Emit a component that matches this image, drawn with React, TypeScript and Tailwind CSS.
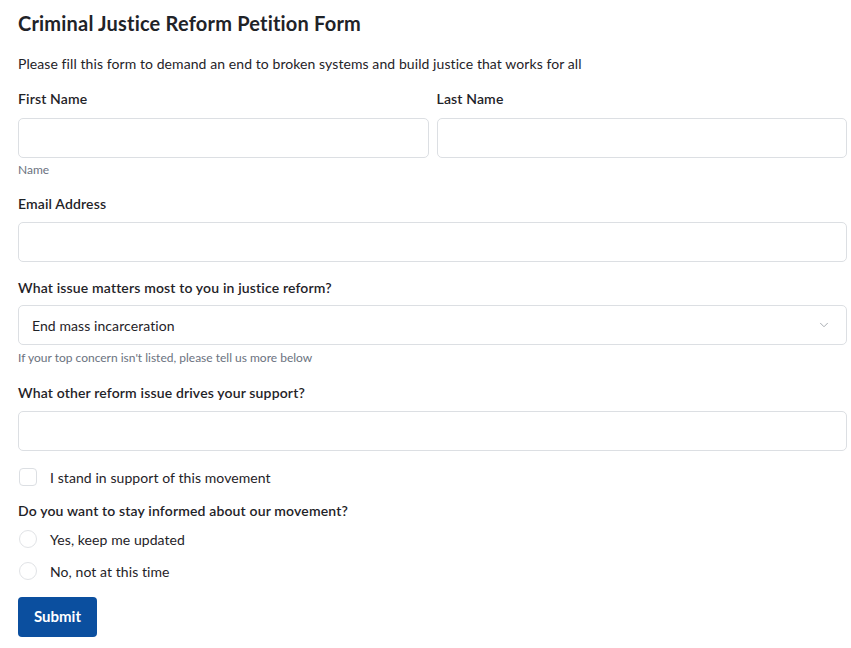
import { ChevronDown } from "lucide-react";

const font = { fontFamily: '"Lato", "Liberation Sans", sans-serif' };

const Label = ({ children, className = "" }: { children: React.ReactNode; className?: string }) => (
  <div className={`text-[14px] leading-5 font-semibold tracking-[0.15px] text-[#1f2328] ${className}`}>{children}</div>
);

const TextInput = ({ className = "" }: { className?: string }) => (
  <input
    type="text"
    className={`block w-full h-10 rounded-[5px] border border-[#dcdfe3] bg-white px-3 text-[14px] outline-none ${className}`}
  />
);

export default function App() {
  return (
    <div className="min-h-screen bg-white text-[#1f2328]" style={font}>
      <form className="w-[829px] ml-[18px] pt-[11px]" onSubmit={e => e.preventDefault()}>
        <h1 className="text-[20px] leading-6 font-bold tracking-[0.2px] text-[#1f2328]">Criminal Justice Reform Petition Form</h1>
        <p className="mt-[19px] text-[14px] leading-5 tracking-[0.08px] text-[#1f2328]">
          Please fill this form to demand an end to broken systems and build justice that works for all
        </p>

        <div className="mt-[15px] grid grid-cols-2 gap-x-2">
          <div>
            <Label>First Name</Label>
            <TextInput className="mt-[9px]" />
            <div className="mt-[5px] text-[12px] leading-[14px] text-[#6b7280]">Name</div>
          </div>
          <div>
            <Label>Last Name</Label>
            <TextInput className="mt-[9px]" />
          </div>
        </div>

        <Label className="mt-[17px]">Email Address</Label>
        <TextInput className="mt-2" />

        <Label className="mt-4">What issue matters most to you in justice reform?</Label>
        <div className="relative mt-[7px] h-10 w-full rounded-[5px] border border-[#dcdfe3] bg-white flex items-center pl-[13px] pr-[15px]">
          <span className="text-[14px] tracking-[0.08px] text-[#1f2328] flex-1">End mass incarceration</span>
          <ChevronDown className="w-[14px] h-[14px] text-[#9aa0a6]" strokeWidth={1.5} />
        </div>
        <div className="mt-[6px] text-[12px] leading-[14px] text-[#6b7280]">
          If your top concern isn't listed, please tell us more below
        </div>

        <Label className="mt-[18px]">What other reform issue drives your support?</Label>
        <TextInput className="mt-2" />

        <label className="mt-4 flex items-center h-5">
          <span className="ml-px w-[18px] h-[18px] rounded-[4px] border border-[#dcdfe3] bg-white" />
          <span className="ml-[13px] text-[14px] tracking-[0.08px] text-[#1f2328]">I stand in support of this movement</span>
        </label>

        <Label className="mt-[14px]">Do you want to stay informed about our movement?</Label>
        <label className="mt-2 flex items-center h-5">
          <span className="ml-px w-[18px] h-[18px] rounded-full border border-[#e1e3e6] bg-white" />
          <span className="ml-[13px] text-[14px] tracking-[0.08px] text-[#1f2328]">Yes, keep me updated</span>
        </label>
        <label className="mt-3 flex items-center h-5">
          <span className="ml-px w-[18px] h-[18px] rounded-full border border-[#e1e3e6] bg-white" />
          <span className="ml-[13px] text-[14px] tracking-[0.08px] text-[#1f2328]">No, not at this time</span>
        </label>

        <button
          type="submit"
          className="mt-4 h-10 w-[79px] rounded-[4px] bg-[#0b4f9f] text-white text-[15px] leading-none font-bold pb-[2px]"
        >
          Submit
        </button>
      </form>
    </div>
  );
}
